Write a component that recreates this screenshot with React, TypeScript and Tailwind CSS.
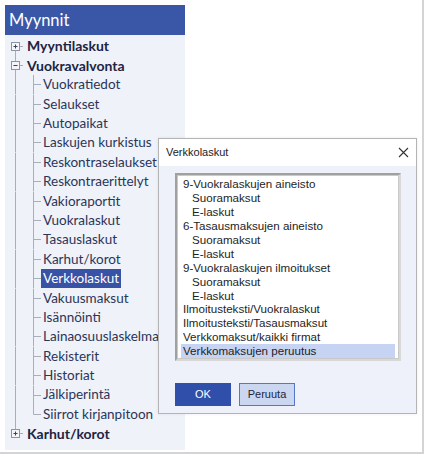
import React from "react";

const LINE = "#a9aebb";

function Box({ plus }: { plus: boolean }) {
  return (
    <g>
      <rect x={6.5} y={5.5} width={8} height={8} fill="#f4f5f8" stroke="#8c93a3" strokeWidth={1} />
      <line x1={8.5} y1={9.5} x2={12.5} y2={9.5} stroke="#3a4256" strokeWidth={1} />
      {plus && <line x1={10.5} y1={7.5} x2={10.5} y2={11.5} stroke="#3a4256" strokeWidth={1} />}
    </g>
  );
}

function TopRow({ label, plus, first, last }: { label: string; plus: boolean; first?: boolean; last?: boolean }) {
  return (
    <div className="flex items-center h-[19.4px]">
      <svg width={22} height={19.4} className="shrink-0">
        {!first && <line x1={10.5} y1={0} x2={10.5} y2={5.5} stroke={LINE} strokeWidth={1} />}
        {!last && <line x1={10.5} y1={13.5} x2={10.5} y2={19.4} stroke={LINE} strokeWidth={1} />}
        <line x1={14.5} y1={9.5} x2={18} y2={9.5} stroke={LINE} strokeWidth={1} />
        <Box plus={plus} />
      </svg>
      <span className="font-bold text-[14px] text-[#1d2442] leading-none">{label}</span>
    </div>
  );
}

function ChildRow({ label, last, selected }: { label: string; last?: boolean; selected?: boolean }) {
  return (
    <div className="flex items-center h-[19.4px]">
      <svg width={36} height={19.4} className="shrink-0">
        <line x1={10.5} y1={0} x2={10.5} y2={19.4} stroke={LINE} strokeWidth={1} />
        <line x1={28.5} y1={0} x2={28.5} y2={last ? 9.5 : 19.4} stroke={LINE} strokeWidth={1} />
        <line x1={28.5} y1={9.5} x2={36} y2={9.5} stroke={LINE} strokeWidth={1} />
      </svg>
      <span
        className={
          "text-[13.5px] leading-none h-[19px] flex items-center px-[2px] " +
          (selected ? "bg-[#3852a6] text-white" : "text-[#2c3557]")
        }
      >
        {label}
      </span>
    </div>
  );
}

const children = [
  "Vuokratiedot",
  "Selaukset",
  "Autopaikat",
  "Laskujen kurkistus",
  "Reskontraselaukset",
  "Reskontraerittelyt",
  "Vakioraportit",
  "Vuokralaskut",
  "Tasauslaskut",
  "Karhut/korot",
  "Verkkolaskut",
  "Vakuusmaksut",
  "Isännöinti",
  "Lainaosuuslaskelma",
  "Rekisterit",
  "Historiat",
  "Jälkiperintä",
  "Siirrot kirjanpitoon",
];

const listItems: { t: string; sub?: boolean }[] = [
  { t: "9-Vuokralaskujen aineisto" },
  { t: "Suoramaksut", sub: true },
  { t: "E-laskut", sub: true },
  { t: "6-Tasausmaksujen aineisto" },
  { t: "Suoramaksut", sub: true },
  { t: "E-laskut", sub: true },
  { t: "9-Vuokralaskujen ilmoitukset" },
  { t: "Suoramaksut", sub: true },
  { t: "E-laskut", sub: true },
  { t: "Ilmoitusteksti/Vuokralaskut" },
  { t: "Ilmoitusteksti/Tasausmaksut" },
  { t: "Verkkomaksut/kaikki firmat" },
  { t: "Verkkomaksujen peruutus" },
];

export default function App() {
  return (
    <div className="w-[425px] h-[456px] bg-white relative overflow-hidden" style={{ fontFamily: 'Lato, "Noto Sans", sans-serif' }}>
      <div className="w-[424px] h-[454px] border-r-2 border-b-2 border-[#d4d4d4] pt-[5px] pl-[5px]">
        <div className="w-[180px] h-[445px] bg-[#eff2f9] flex flex-col">
          <div className="h-[30px] bg-[#3a57a7] flex items-center pl-[4px]">
            <span className="text-white text-[16.5px] leading-none">Myynnit</span>
          </div>
          <div className="pt-[1.5px] flex flex-col">
            <TopRow label="Myyntilaskut" plus first />
            <TopRow label="Vuokravalvonta" plus={false} />
            {children.map((c, i) => (
              <ChildRow key={i} label={c} last={i === children.length - 1} selected={c === "Verkkolaskut"} />
            ))}
            <TopRow label="Karhut/korot" plus last />
          </div>
        </div>
      </div>

      <div
        className="absolute left-[158px] top-[138px] w-[259px] h-[276px] border border-[#b4b4b4] bg-[#eef1f9] flex flex-col shadow-[0_0_3px_rgba(0,0,0,0.08)]"
        style={{ fontFamily: '"Liberation Sans", Arial, sans-serif' }}
      >
        <div className="h-[27px] bg-white flex items-center justify-between pl-[7px] pr-[7px] shrink-0">
          <span className="text-[11px] text-[#222]">Verkkolaskut</span>
          <svg width={11} height={11} viewBox="0 0 11 11">
            <path d="M1 1 L10 10 M10 1 L1 10" stroke="#333" strokeWidth={1.1} />
          </svg>
        </div>
        <div className="flex flex-col pl-[16px] pt-[7px]">
          <div className="w-[226px] h-[188px] border-2 border-t-[#a0a0a0] border-l-[#a0a0a0] border-r-[#d8d8d8] border-b-[#d8d8d8] bg-white">
            <div className="w-full h-full border border-[#c9c9c9] pt-[1px] px-[3px] flex flex-col">
              {listItems.map((it, i) => (
                <div
                  key={i}
                  className={
                    "h-[14.1px] flex items-center text-[11.6px] leading-none text-[#1e1e1e] " +
                    (it.sub ? "pl-[11px] " : "pl-[2px] ") +
                    (i === listItems.length - 1 ? "bg-[#c7d3f2]" : "")
                  }
                >
                  {it.t}
                </div>
              ))}
            </div>
          </div>
          <div className="flex gap-[8px] mt-[22px]">
            <div className="w-[56px] h-[23px] bg-[#2f4fab] flex items-center justify-center text-white text-[11px]">OK</div>
            <div className="w-[56px] h-[23px] bg-[#cbd6f1] border border-[#5676c9] flex items-center justify-center text-[#1e2436] text-[11px]">
              Peruuta
            </div>
          </div>
        </div>
      </div>
    </div>
  );
}
